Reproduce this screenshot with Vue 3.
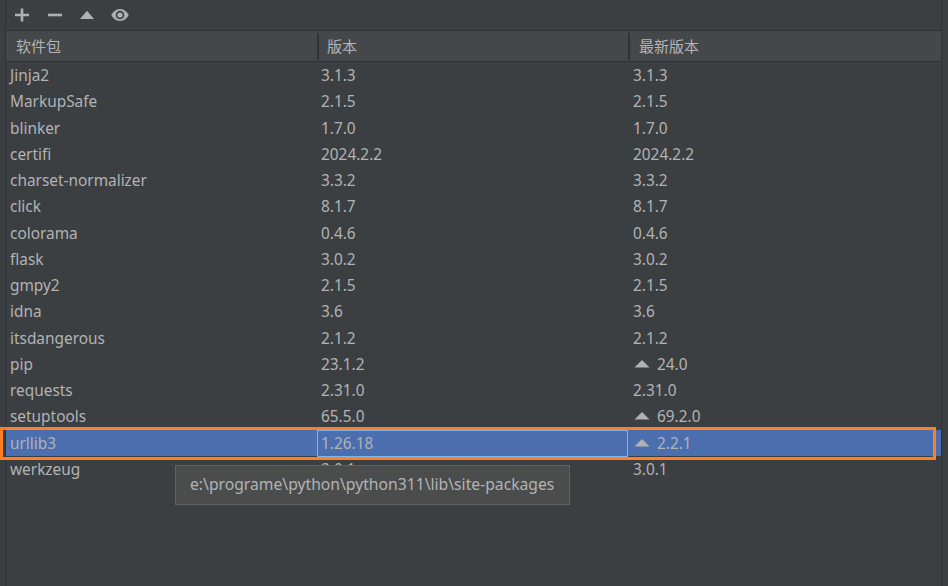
<script setup>
const up = 'up'
const rows = [
  ['Jinja2', '3.1.3', '3.1.3'],
  ['MarkupSafe', '2.1.5', '2.1.5'],
  ['blinker', '1.7.0', '1.7.0'],
  ['certifi', '2024.2.2', '2024.2.2'],
  ['charset-normalizer', '3.3.2', '3.3.2'],
  ['click', '8.1.7', '8.1.7'],
  ['colorama', '0.4.6', '0.4.6'],
  ['flask', '3.0.2', '3.0.2'],
  ['gmpy2', '2.1.5', '2.1.5'],
  ['idna', '3.6', '3.6'],
  ['itsdangerous', '2.1.2', '2.1.2'],
  ['pip', '23.1.2', '24.0', up],
  ['requests', '2.31.0', '2.31.0'],
  ['setuptools', '65.5.0', '69.2.0', up],
  ['urllib3', '1.26.18', '2.2.1', up],
  ['werkzeug', '3.0.1', '3.0.1'],
]
</script>

<template>
  <div class="window">
    <div class="panel">
      <div class="toolbar">
        <svg class="tool" width="16" height="16" viewBox="0 0 16 16"><path d="M8 1.500v13M1 8h14" stroke="#afb1b3" stroke-width="2.600" fill="none" /></svg>
        <svg class="tool" width="16" height="16" viewBox="0 0 16 16"><path d="M1 8h14" stroke="#afb1b3" stroke-width="2.600" fill="none" /></svg>
        <svg class="tool" width="16" height="16" viewBox="0 0 16 16"><path d="M8 3.800 15 12H1z" fill="#afb1b3" /></svg>
        <svg class="tool eye" width="18" height="16" viewBox="0 0 18 16"><path d="M9 2C5 2 1.800 5 .3 8 1.800 11 5 14 9 14S16.200 11 17.700 8C16.200 5 13 2 9 2z" fill="#afb1b3" /><circle cx="9" cy="8" r="4.300" fill="#3c3f41" /><circle cx="9" cy="8" r="2.600" fill="#afb1b3" /></svg>
      </div>
      <div class="head">
        <div class="hcell first">软件包</div>
        <div class="hcell">版本</div>
        <div class="hcell">最新版本</div>
      </div>
      <div class="body">
        <div v-for="r in rows" :key="r[0]" class="row" :class="{ selected: r[0] === 'urllib3' }">
          <div class="cell">{{ r[0] }}</div>
          <div class="cell ver"><span class="focus">{{ r[1] }}</span></div>
          <div class="cell latest">
            <svg v-if="r[3]" class="arrow" width="16" height="10" viewBox="0 0 16 10"><path d="M8 1 15.500 8.500H.5z" fill="#afb1b3" /></svg>{{ r[2] }}
          </div>
        </div>
      </div>
    </div>
    <div class="mark"></div>
    <div class="tip">e:\programe\python\python311\lib\site-packages</div>
  </div>
</template>

<style scoped>
.window {
  position: relative;
  width: 948px;
  height: 586px;
  overflow: hidden;
  background: #3c3f41;
  color: #b1b3b5;
  font: 15.4px/20px "Noto Sans", "Noto Sans CJK SC", sans-serif;
}
.panel {
  height: 100%;
  margin: 0 6px 0 5px;
  border-left: 1px solid #323232;
  border-right: 1px solid #323232;
}
.toolbar {
  height: 30px;
  display: flex;
  align-items: center;
  gap: 16.5px;
  padding-left: 8px;
  border-bottom: 1px solid #323232;
}
.tool { flex: none; }
.eye { margin: 0 -1px; }
.head {
  height: 30px;
  display: grid;
  grid-template-columns: 311px 311px 1fr;
  background: #45484a;
  border-bottom: 1px solid #323232;
}
.hcell {
  padding: 0 8px;
  font-size: 15px;
  border-left: 2px solid #323232;
  margin: 2px 0;
  line-height: 27px;
}
.hcell:last-child { padding-left: 9px; }
.hcell.first { border-left: 0; padding-left: 10px; }
.row {
  height: 26.27px;
  display: grid;
  grid-template-columns: 311px 311px 1fr;
  line-height: 26px;
}
.cell { padding: 1px 0 0 4px; box-sizing: border-box; white-space: nowrap; }
.ver { padding-left: 0; }
.focus { display: block; padding-left: 4px; }
.latest { display: flex; align-items: flex-start; padding-left: 5px; }
.arrow { margin: 7px 7px 0 1px; flex: none; }
.selected { background: #4b6eaf; }
.selected .ver { padding-top: 0; }
.selected .focus {
  height: 100%;
  box-sizing: border-box;
  border: 1px solid #7eb4ea;
  padding-left: 3px;
  line-height: 25px;
}
.mark {
  position: absolute;
  left: 0;
  top: 427px;
  width: 936px;
  height: 33px;
  box-sizing: border-box;
  border: 3px solid #ff7f27;
}
.tip {
  position: absolute;
  left: 175px;
  top: 465px;
  width: 395px;
  height: 40px;
  box-sizing: border-box;
  padding-left: 14px;
  font-size: 15.7px;
  line-height: 36px;
  background: #4b4d4d;
  border: 1px solid #606262;
}
</style>
